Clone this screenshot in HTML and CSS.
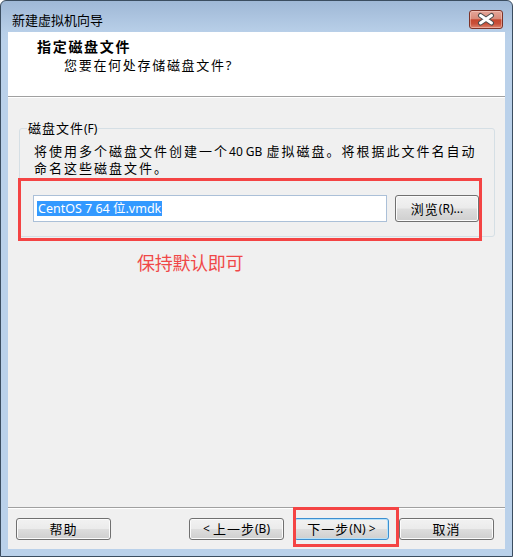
FILE: index.html
```html
<!DOCTYPE html>
<html lang="zh-CN">
<head>
<meta charset="utf-8">
<title>新建虚拟机向导</title>
<link rel="stylesheet" href="styles.css">
</head>
<body>
<div class="window">
  <div class="titlebar">
    <span class="title">新建虚拟机向导</span>
    <div class="close">
      <svg width="34" height="19" viewBox="0 0 34 19">
        <path d="M11.5 5.5 L22.5 13 M22.5 5.5 L11.5 13" stroke="#4d4d4d" stroke-width="5" stroke-linecap="round" fill="none"/>
        <path d="M11.5 5.5 L22.5 13 M22.5 5.5 L11.5 13" stroke="#ffffff" stroke-width="3" stroke-linecap="round" fill="none"/>
      </svg>
    </div>
  </div>
  <div class="client">
    <div class="header">
      <div class="h-title">指定磁盘文件</div>
      <div class="h-sub">您要在何处存储磁盘文件?</div>
    </div>
    <div class="main">
      <fieldset class="group">
        <legend>磁盘文件<span class="lat">(F)</span></legend>
        <p class="desc">将使用多个磁盘文件创建一个<span class="lat num">40 GB</span>虚拟磁盘。将根据此文件名自动<br>命名这些磁盘文件。</p>
        <div class="row">
          <div class="input"><span class="sel">CentOS 7 64 位.vmdk</span></div>
          <div class="btn browse">浏览<span class="lat">(R)...</span></div>
        </div>
      </fieldset>
      <div class="hint">保持默认即可</div>
    </div>
    <div class="footer">
      <div class="btn">帮助</div>
      <div class="spacer"></div>
      <div class="btn"><span class="lat">&lt;&nbsp;</span>上一步<span class="lat">(B)</span></div>
      <div class="btn default">下一步<span class="lat">(N)&nbsp;&gt;</span></div>
      <div class="btn">取消</div>
    </div>
    <div class="mark mark-file"></div>
    <div class="mark mark-next"></div>
  </div>
</div>
</body>
</html>
```

FILE: styles.css
```css
html, body {
  margin: 0;
  padding: 0;
  background: #ffffff;
}

body {
  font-family: "Noto Sans", "Noto Sans CJK SC", sans-serif;
  color: #000;
}

.window {
  width: 513px;
  height: 557px;
  box-sizing: border-box;
  border: 1px solid #3b4d60;
  border-radius: 6px 6px 0 0;
  background: linear-gradient(#9fb8d6 0px, #b8cfe8 31px, #bad1ea 40px, #bad1ea 100%);
  padding: 0 7px 7px 7px;
  display: flex;
  flex-direction: column;
}

.titlebar {
  height: 31px;
  flex: none;
  display: flex;
  align-items: flex-start;
  justify-content: space-between;
}

.title {
  margin: 11px 0 0 4px;
  font-size: 13px;
  line-height: 16px;
  color: #000;
}

.close {
  margin: 9px 2px 0 0;
  width: 34px;
  height: 19px;
  box-sizing: border-box;
  border: 1px solid #7d3328;
  border-radius: 3px;
  background: linear-gradient(#e5a699 0%, #d98b7a 45%, #c5472f 52%, #c9503a 75%, #dc8670 100%);
  box-shadow: inset 0 0 0 1px rgba(255, 220, 210, 0.45);
  display: flex;
  align-items: center;
  justify-content: center;
  overflow: hidden;
}

.close svg {
  display: block;
  flex: none;
}

.client {
  flex: 1;
  position: relative;
  display: flex;
  flex-direction: column;
  background: #f0f0f0;
}

.header {
  height: 64px;
  flex: none;
  background: #ffffff;
  border-bottom: 1px solid #a0a0a0;
}

.h-title {
  padding: 6px 0 0 29px;
  font-size: 14px;
  line-height: 17px;
  font-weight: bold;
  letter-spacing: 1.7px;
}

.h-sub {
  padding: 2px 0 0 56px;
  font-size: 13px;
  line-height: 17px;
  letter-spacing: 1.7px;
}

.main {
  flex: 1;
  border-top: 1px solid #ffffff;
  padding-top: 22px;
}

.lat {
  font-family: "Noto Sans", sans-serif;
  font-size: 12px;
  letter-spacing: 0;
}

.num {
  margin: 0 4px 0 0;
}

.group {
  margin: 0 10px 0 11px;
  padding: 0 15px 14px 13px;
  border: 1px solid #d5dfe5;
  border-radius: 3px;
  min-width: 0;
}

.group legend {
  margin-left: -6px;
  padding: 0 1px;
  font-size: 13px;
  line-height: 16px;
  letter-spacing: 1px;
}

.desc {
  margin: 6px 0 0 1px;
  font-size: 13px;
  line-height: 17px;
  letter-spacing: 2px;
  white-space: nowrap;
}

.row {
  margin-top: 18px;
  display: flex;
  gap: 8px;
}

.input {
  width: 355px;
  height: 27px;
  box-sizing: border-box;
  border: 1px solid #abc0d8;
  background: #ffffff;
  padding-left: 3px;
  display: flex;
  align-items: center;
}

.sel {
  background: #3399ff;
  color: #ffffff;
  font-family: "Noto Sans", "Noto Sans CJK SC", sans-serif;
  font-size: 12.5px;
  line-height: 15px;
  padding: 0 1px;
}

.btn {
  width: 95px;
  height: 22px;
  box-sizing: border-box;
  border: 1px solid #707070;
  border-radius: 3px;
  background: linear-gradient(#f2f2f2 0%, #ebebeb 48%, #dddddd 52%, #cfcfcf 100%);
  box-shadow: inset 0 0 0 1px #fbfbfb;
  display: flex;
  align-items: center;
  justify-content: center;
  font-size: 13px;
  letter-spacing: 1px;
  line-height: 16px;
  flex: none;
}

.browse {
  width: 84px;
  height: 27px;
}

.btn.default {
  border-color: #3c8fd0;
  box-shadow: inset 0 0 0 1px #b5e1fa;
}

.hint {
  margin: 15px 0 0 129px;
  font-size: 18px;
  line-height: 22px;
  letter-spacing: -0.3px;
  color: #f04848;
}

.footer {
  height: 42px;
  flex: none;
  box-sizing: border-box;
  border-top: 1px solid #a0a0a0;
  box-shadow: inset 0 1px 0 #ffffff;
  padding: 10px 11px 0 8px;
  display: flex;
  align-items: flex-start;
  gap: 10px;
}

.spacer {
  flex: 1;
}

.mark {
  position: absolute;
  box-sizing: border-box;
  border: 3px solid #f44444;
  pointer-events: none;
}

.mark-file {
  left: 10px;
  top: 146px;
  width: 464px;
  height: 63px;
}

.mark-next {
  left: 285px;
  top: 475px;
  width: 106px;
  height: 40px;
}
```
